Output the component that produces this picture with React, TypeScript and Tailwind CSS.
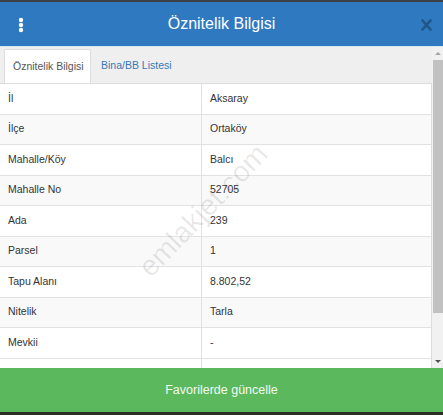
import React from "react";

const rows: { label: string; value: string }[] = [
  { label: "İl", value: "Aksaray" },
  { label: "İlçe", value: "Ortaköy" },
  { label: "Mahalle/Köy", value: "Balcı" },
  { label: "Mahalle No", value: "52705" },
  { label: "Ada", value: "239" },
  { label: "Parsel", value: "1" },
  { label: "Tapu Alanı", value: "8.802,52" },
  { label: "Nitelik", value: "Tarla" },
  { label: "Mevkii", value: "-" },
];

const KebabIcon = () => (
  <svg width="6" height="16" viewBox="0 0 6 16" className="text-white">
    <circle cx="3" cy="3" r="2.2" fill="currentColor" />
    <circle cx="3" cy="8" r="2.2" fill="currentColor" />
    <circle cx="3" cy="13" r="2.2" fill="currentColor" />
  </svg>
);

const CloseIcon = () => (
  <svg width="11" height="12" viewBox="0 0 11 12">
    <path
      d="M1.5 1.5 L9.5 10.5 M9.5 1.5 L1.5 10.5"
      stroke="#1e4f7c"
      strokeWidth="2.6"
      strokeLinecap="round"
      opacity="0.85"
    />
  </svg>
);

export default function App() {
  return (
    <div
      className="relative flex h-[415px] w-[443px] flex-col overflow-hidden bg-[#2b2f33]"
      style={{ fontFamily: '"Liberation Sans", Arial, sans-serif' }}
    >
      {/* map strip behind the dialog */}
      <div className="h-[2px] bg-[#3b4046]" />

      {/* Header */}
      <div className="relative flex h-[44px] items-center justify-center bg-[#2f79c0]">
        <div className="absolute left-[18px] top-[15px]">
          <KebabIcon />
        </div>
        <h1 className="text-[16px] text-white">Öznitelik Bilgisi</h1>
        <div className="absolute right-[11px] top-[17px]">
          <CloseIcon />
        </div>
      </div>
      <div className="h-[1px] bg-[#dce8f3]" />

      {/* Body */}
      <div className="relative flex h-[321px]">
        <div className="flex w-[432px] flex-col">
          {/* Tabs */}
          <div className="flex h-[36px] items-end bg-[#efefef] px-[4px]">
            <div className="flex h-[34px] w-[87px] items-center rounded-t-[2px] border border-b-0 border-[#dddddd] bg-white pl-[8px] text-[10.5px] text-[#555555]">
              Öznitelik Bilgisi
            </div>
            <div className="flex h-[34px] items-center pl-[10px] text-[10.5px] text-[#337ab7]">
              Bina/BB Listesi
            </div>
          </div>

          {/* Table */}
          <div className="flex flex-1 flex-col overflow-hidden border-t border-r border-[#dddddd] bg-white text-[10.5px] text-[#333333]">
            {rows.map((row, i) => (
              <div
                key={row.label}
                className={`flex h-[30.5px] shrink-0 border-b border-[#e2e2e2] ${
                  i % 2 === 1 ? "bg-[#f9f9f9]" : "bg-white"
                }`}
              >
                <div className="flex w-[202px] items-center border-r border-[#e2e2e2] pl-[8px]">
                  {row.label}
                </div>
                <div className="flex flex-1 items-center pl-[8px]">{row.value}</div>
              </div>
            ))}
            <div className="flex flex-1">
              <div className="w-[202px] border-r border-[#e2e2e2]" />
            </div>
          </div>
        </div>

        {/* Scrollbar */}
        <div className="flex w-[11px] flex-col bg-[#f1f1f1]">
          <div className="flex h-[13px] items-center justify-center">
            <div className="h-0 w-0 border-x-[3px] border-b-[3px] border-x-transparent border-b-[#a3a3a3]" />
          </div>
          <div className="flex-1">
            <div className="ml-[1px] h-[253px] bg-[#c1c1c1]" />
          </div>
          <div className="flex h-[13px] items-center justify-center">
            <div className="h-0 w-0 border-x-[3px] border-t-[3px] border-x-transparent border-t-[#505050]" />
          </div>
        </div>

        {/* Watermark */}
        <div className="pointer-events-none absolute left-[118px] top-[142px] -rotate-[46deg] select-none text-[29px] text-black/[0.09]">
          emlakjet.com
        </div>
      </div>

      {/* Footer button */}
      <button className="h-[44px] w-full bg-[#5cb85c] text-[12.5px] text-[#f2f9f2]">
        Favorilerde güncelle
      </button>
      <div className="h-[3px] bg-[#2a2e24]" />
    </div>
  );
}
